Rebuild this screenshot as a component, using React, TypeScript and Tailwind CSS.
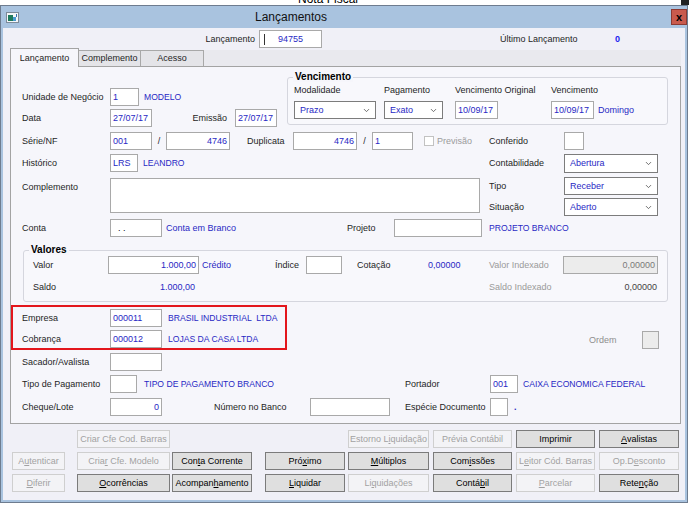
import React from 'react';
import { ChevronDown } from 'lucide-react';

type P = { className?: string; children?: React.ReactNode };

const Input = ({
  className = '',
  children,
  right = false,
  disabled = false,
}: P & { right?: boolean; disabled?: boolean }) => (
  <div
    className={`h-[18px] shrink-0 border border-[#a9a9a9] flex items-center px-[2px] ${
      disabled ? 'bg-[#ececec] text-[#7a7a7a]' : 'bg-white text-[#2828c4]'
    } ${right ? 'justify-end' : ''} ${className}`}
  >
    {children}
  </div>
);

const Select = ({ className = '', children }: P) => (
  <div
    className={`h-[18px] shrink-0 border border-[#7c7c7c] bg-white flex items-center justify-between pl-[5px] pr-[4px] text-[#2828c4] ${className}`}
  >
    <span>{children}</span>
    <ChevronDown size={9} strokeWidth={2.2} className="text-[#555]" />
  </div>
);

const L = ({ className = '', children }: P) => (
  <span className={`shrink-0 whitespace-nowrap ${className}`}>{children}</span>
);

const Row = ({ className = '', children }: P) => (
  <div className={`flex items-center h-[18px] ${className}`}>{children}</div>
);

const Btn = ({
  cls,
  label,
  u,
  disabled,
  hidden,
}: {
  cls: string;
  label?: string;
  u?: number;
  disabled?: boolean;
  hidden?: boolean;
}) => {
  if (hidden) return <div className={`${cls} h-[18px] shrink-0`} />;
  const text = label ?? '';
  return (
    <div
      className={`${cls} h-[18px] shrink-0 flex items-center justify-center border ${
        disabled ? 'border-[#cfcfcf] bg-[#f3f3f6] text-[#a2a2a2]' : 'border-[#7b7b7b] bg-[#dfdfdf] text-black'
      }`}
    >
      <span className="whitespace-pre">
        {u === undefined ? (
          text
        ) : (
          <>
            {text.slice(0, u)}
            <span className="underline underline-offset-[1px]">{text[u]}</span>
            {text.slice(u + 1)}
          </>
        )}
      </span>
    </div>
  );
};

const C = [
  'ml-[9px] w-[53px]',
  'ml-[12px] w-[93px]',
  'ml-[2px] w-[80px]',
  'ml-[13px] w-[80px]',
  'ml-[3px] w-[81px]',
  'ml-[4px] w-[79px]',
  'ml-[4px] w-[79px]',
  'ml-[4px] w-[80px]',
];

const UP = 'text-[#2828c4] text-[8.6px]';

export default function App() {
  return (
    <div className="w-[693px] h-[506px] bg-white overflow-hidden font-['Liberation_Sans',Arial,sans-serif] text-[9px] text-[#1e1e1e] leading-none">
      {/* parent window remnant */}
      <div className="h-[5px] overflow-hidden flex">
        <div className="pl-[298px] -mt-[7px] text-[12px] text-black">Nota Fiscal</div>
        <div className="ml-auto mr-[4px] w-[8px] h-[5px] bg-[#222]" />
      </div>

      {/* window */}
      <div className="w-[688px] h-[498px] border border-[#6e7c8f] flex flex-col">
        {/* title bar */}
        <div className="h-[22px] shrink-0 bg-[#a9c3df] flex items-center">
          <svg width="13" height="11" viewBox="0 0 13 11" className="ml-[5px] shrink-0">
            <rect x="0.5" y="0.5" width="12" height="10" fill="#f4f6f8" stroke="#7d8a99" />
            <rect x="2" y="3" width="5" height="6" fill="#1f7a5c" />
            <rect x="7" y="5" width="3" height="4" fill="#4a9ad0" />
            <rect x="10" y="2" width="1" height="3" fill="#3b6fb0" />
          </svg>
          <span className="ml-[236px] text-[12px] text-[#111]">Lançamentos</span>
          <div className="ml-auto mr-[0px] w-[16px] h-[16px] bg-[#c95a4d] border border-[#8c3a33] flex items-center justify-center text-[11px] font-bold text-black">
            x
          </div>
        </div>

        {/* body */}
        <div className="flex-1 bg-[#f0f0f7] border-x-2 border-b-2 border-[#a9c3df] flex flex-col">
          {/* header */}
          <Row className="mt-[2px]">
            <L className="w-[256px] text-right pr-[4px]">Lançamento</L>
            <div className="h-[18px] w-[63px] shrink-0 border border-[#a9a9a9] bg-white flex items-center text-[#2828c4] relative">
              <div className="absolute left-[4px] top-[3px] w-[1px] h-[11px] bg-[#333]" />
              <span className="w-full text-center">94755</span>
            </div>
            <span className="w-[178px] shrink-0" />
            <L className="w-[115px]">Último Lançamento</L>
            <L className="font-bold text-[#1d1df0]">0</L>
          </Row>

          {/* tabs */}
          <div className="flex items-end h-[18px] ml-[7px]">
            <div className="relative z-10 w-[69px] h-[19px] -mb-[1px] border-t border-x border-[#a3a3a3] bg-[#f6f6fb] flex items-center justify-center">
              Lançamento
            </div>
            <div className="w-[62px] h-[16px] border-t border-r border-[#a8a8a8] bg-[#e4e4e8] flex items-center justify-center">
              Complemento
            </div>
            <div className="w-[63px] h-[16px] border-t border-r border-[#a8a8a8] bg-[#e4e4e8] flex items-center justify-center">
              Acesso
            </div>
            <div className="w-[477px] h-[16px] bg-[#e9e9ee]" />
          </div>

          {/* panel */}
          <div className="ml-[7px] w-[671px] h-[358px] shrink-0 border border-[#a3a3a3] bg-[#f6f6fb] pl-[11px] pt-[10px] flex flex-col">
            {/* section 1 */}
            <div className="flex items-start">
              <div className="w-[265px] shrink-0 pt-[11px] flex flex-col gap-[3px]">
                <Row>
                  <L className="w-[88px]">Unidade de Negócio</L>
                  <Input className="w-[29px]">1</Input>
                  <L className={`ml-[5px] ${UP}`}>MODELO</L>
                </Row>
                <Row>
                  <L className="w-[88px]">Data</L>
                  <Input className="w-[42px]">27/07/17</Input>
                  <L className="w-[83px] text-right pr-[8px]">Emissão</L>
                  <Input className="w-[42px]">27/07/17</Input>
                </Row>
              </div>
              <div className="relative w-[381px] h-[48px] shrink-0 border border-[#d5d6de] rounded-[3px] bg-[#f8f8fc] pl-[6px] pt-[8px] flex">
                <span className="absolute -top-[6px] left-[5px] px-[2px] bg-[#f6f6fb] font-bold text-[10px] text-black">
                  Vencimento
                </span>
                <div className="w-[90px] shrink-0 flex flex-col">
                  <L className="h-[11px]">Modalidade</L>
                  <Select className="w-[82px] mt-[4px]">Prazo</Select>
                </div>
                <div className="w-[71px] shrink-0 flex flex-col">
                  <L className="h-[11px]">Pagamento</L>
                  <Select className="w-[59px] mt-[4px]">Exato</Select>
                </div>
                <div className="w-[96px] shrink-0 flex flex-col">
                  <L className="h-[11px]">Vencimento Original</L>
                  <Input className="w-[43px] mt-[4px]">10/09/17</Input>
                </div>
                <div className="flex flex-col">
                  <L className="h-[11px]">Vencimento</L>
                  <div className="flex items-center mt-[4px]">
                    <Input className="w-[43px]">10/09/17</Input>
                    <L className="ml-[4px] text-[#2828c4]">Domingo</L>
                  </div>
                </div>
              </div>
            </div>

            {/* Série/NF */}
            <Row className="mt-[5px]">
              <L className="w-[88px]">Série/NF</L>
              <Input className="w-[42px]">001</Input>
              <L className="w-[14px] text-center">/</L>
              <Input className="w-[64px]" right>
                4746
              </Input>
              <L className="w-[63px] pl-[17px]">Duplicata</L>
              <Input className="w-[64px]" right>
                4746
              </Input>
              <L className="w-[15px] text-center">/</L>
              <Input className="w-[41px]">1</Input>
              <div className="w-[76px] shrink-0 flex items-center pl-[11px]">
                <div className="w-[10px] h-[10px] border border-[#c2c2c2] bg-white" />
                <L className="ml-[3px] text-[#9b9b9b]">Previsão</L>
              </div>
              <L className="w-[75px]">Conferido</L>
              <Input className="w-[20px]" />
            </Row>

            {/* Histórico */}
            <Row className="mt-[4px]">
              <L className="w-[88px]">Histórico</L>
              <Input className="w-[28px]">LRS</Input>
              <L className={`w-[351px] pl-[5px] ${UP}`}>LEANDRO</L>
              <L className="w-[75px]">Contabilidade</L>
              <Select className="w-[94px] h-[19px]">Abertura</Select>
            </Row>

            {/* Complemento */}
            <div className="flex items-start mt-[5px]">
              <L className="w-[88px] pt-[6px]">Complemento</L>
              <div className="w-[370px] h-[35px] shrink-0 mt-[1px] border border-[#a9a9a9] bg-white" />
              <div className="ml-[9px] flex flex-col gap-[3px]">
                <Row>
                  <L className="w-[75px]">Tipo</L>
                  <Select className="w-[94px]">Receber</Select>
                </Row>
                <Row>
                  <L className="w-[75px]">Situação</L>
                  <Select className="w-[94px]">Aberto</Select>
                </Row>
              </div>
            </div>

            {/* Conta */}
            <Row className="mt-[3px]">
              <L className="w-[88px]">Conta</L>
              <Input className="w-[52px] pl-[7px]">
                <span className="text-black">. .</span>
              </Input>
              <L className="w-[185px] pl-[4px] text-[#2828c4]">Conta em Branco</L>
              <L className="w-[47px]">Projeto</L>
              <Input className="w-[88px]" />
              <L className={`ml-[7px] ${UP}`}>PROJETO BRANCO</L>
            </Row>

            {/* Valores */}
            <div className="relative ml-[1px] mt-[13px] w-[645px] h-[52px] shrink-0 border border-[#d5d6de] rounded-[3px] bg-[#f8f8fc] pl-[9px] pt-[5px] flex flex-col">
              <span className="absolute -top-[6px] left-[5px] px-[2px] bg-[#f6f6fb] font-bold text-[10px] text-black">
                Valores
              </span>
              <Row>
                <L className="w-[75px]">Valor</L>
                <Input className="w-[91px]" right>
                  1.000,00
                </Input>
                <L className="w-[76px] pl-[3px] text-[#2828c4]">Crédito</L>
                <L className="w-[31px]">Índice</L>
                <Input className="w-[36px]" />
                <span className="w-[15px] shrink-0" />
                <L className="w-[71px]">Cotação</L>
                <L className="w-[61px] text-[#2828c4]">0,00000</L>
                <L className="w-[74px] text-[#9a9a9a]">Valor Indexado</L>
                <Input className="w-[95px]" right disabled>
                  0,00000
                </Input>
              </Row>
              <Row className="mt-[4px]">
                <L className="w-[75px]">Saldo</L>
                <L className="w-[91px] text-right pr-[4px] text-[#2828c4]">1.000,00</L>
                <span className="w-[290px] shrink-0" />
                <L className="w-[74px] text-[#9a9a9a]">Saldo Indexado</L>
                <L className="w-[95px] text-right pr-[1px] text-[#444]">0,00000</L>
              </Row>
            </div>

            {/* Empresa / Cobrança */}
            <div className="flex items-end mt-[3px]">
              <div className="-ml-[11px] w-[276px] h-[45px] shrink-0 border-2 border-[#e3161c] pl-[9px] pt-[2px] flex flex-col gap-[3px]">
                <Row>
                  <L className="w-[88px]">Empresa</L>
                  <Input className="w-[52px]">000011</Input>
                  <L className={`ml-[6px] whitespace-pre ${UP}`}>BRASIL INDUSTRIAL  LTDA</L>
                </Row>
                <Row>
                  <L className="w-[88px]">Cobrança</L>
                  <Input className="w-[52px]">000012</Input>
                  <L className={`ml-[6px] ${UP}`}>LOJAS DA CASA LTDA</L>
                </Row>
              </div>
              <div className="ml-[302px] mb-[1px] flex items-center">
                <L className="w-[53px] text-[#8e8e8e]">Ordem</L>
                <div className="w-[17px] h-[18px] border border-[#a9a9a9] bg-[#ececec]" />
              </div>
            </div>

            {/* Sacador */}
            <Row className="mt-[3px]">
              <L className="w-[88px]">Sacador/Avalista</L>
              <Input className="w-[52px]" />
            </Row>

            {/* Tipo de pagamento */}
            <Row className="mt-[4px]">
              <L className="w-[88px]">Tipo de Pagamento</L>
              <Input className="w-[27px]" />
              <L className={`w-[268px] pl-[7px] ${UP}`}>TIPO DE PAGAMENTO BRANCO</L>
              <L className="w-[85px]">Portador</L>
              <Input className="w-[28px]">001</Input>
              <L className={`ml-[5px] ${UP}`}>CAIXA ECONOMICA FEDERAL</L>
            </Row>

            {/* Cheque */}
            <Row className="mt-[5px]">
              <L className="w-[88px]">Cheque/Lote</L>
              <Input className="w-[52px]" right>
                0
              </Input>
              <L className="w-[148px] pl-[52px]">Número no Banco</L>
              <Input className="w-[80px]" />
              <L className="w-[100px] pl-[15px]">Espécie Documento</L>
              <Input className="w-[18px]" />
              <L className="ml-[6px] text-[#2828c4] font-bold">.</L>
            </Row>
          </div>

          {/* buttons */}
          <div className="mt-[6px] flex flex-col gap-[4px]">
            <div className="flex">
              <Btn cls={C[0]} hidden />
              <Btn cls={C[1]} label="Criar Cfe Cod. Barras" disabled />
              <Btn cls={C[2]} hidden />
              <Btn cls={C[3]} hidden />
              <Btn cls={C[4]} label="Estorno Liquidação" u={9} disabled />
              <Btn cls={C[5]} label="Prévia Contábil" disabled />
              <Btn cls={C[6]} label="Imprimir" />
              <Btn cls={C[7]} label="Avalistas" u={0} />
            </div>
            <div className="flex">
              <Btn cls={C[0]} label="Autenticar" u={1} disabled />
              <Btn cls={C[1]} label="Criar Cfe. Modelo" u={4} disabled />
              <Btn cls={C[2]} label="Conta Corrente" u={3} />
              <Btn cls={C[3]} label="Próximo" u={3} />
              <Btn cls={C[4]} label="Múltiplos" u={0} />
              <Btn cls={C[5]} label="Comissões" u={3} />
              <Btn cls={C[6]} label="Leitor Cód. Barras" u={1} disabled />
              <Btn cls={C[7]} label="Op.Desconto" u={4} disabled />
            </div>
            <div className="flex">
              <Btn cls={C[0]} label="Diferir" u={0} disabled />
              <Btn cls={C[1]} label="Ocorrências" u={0} />
              <Btn cls={C[2]} label="Acompanhamento" u={7} />
              <Btn cls={C[3]} label="Liquidar" u={0} />
              <Btn cls={C[4]} label="Liquidações" u={2} disabled />
              <Btn cls={C[5]} label="Contábil" u={5} />
              <Btn cls={C[6]} label="Parcelar" u={0} disabled />
              <Btn cls={C[7]} label="Retenção" u={4} />
            </div>
          </div>
        </div>
      </div>
    </div>
  );
}
